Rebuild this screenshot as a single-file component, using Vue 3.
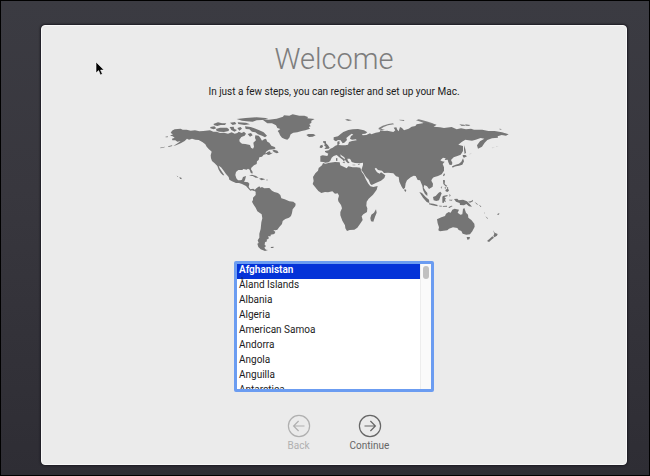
<script setup>
import { ref } from 'vue';

const countries = [
  'Afghanistan',
  'Åland Islands',
  'Albania',
  'Algeria',
  'American Samoa',
  'Andorra',
  'Angola',
  'Anguilla',
  'Antarctica',
  'Antigua & Barbuda',
  'Argentina',
  'Armenia'
];
const country = ref('Afghanistan');
</script>

<template>
  <div class="desktop">
    <main class="window">
      <h1>Welcome</h1>
      <label class="intro" for="country"
        >In just a few steps, you can register and set up your Mac.</label
      >

      <svg class="map" viewBox="0 0 1104 450" aria-hidden="true">
        <!-- the Americas and Greenland -->
        <g>
          <path
            d="M62 84L66 77 74 73 92 71 98 74 110 74 122 77 135 76 148 79 160 78 180 76 190 80 200 80 210 84 222 83 234 86 245 82 254 86 262 84 266 80 275 84 282 80 288 86 284 92 274 96 268 104 269 110 276 116 286 117 300 120 303 128 309 131 312 125 310 113 318 106 315 99 316 91 326 92 331 98 336 107 342 103 348 101 352 110 358 113 364 122 374 126 377 130 372 133 357 134 348 140 346 146 354 140 360 139 362 144 369 143 359 149 354 150 350 147 341 149 336 155 328 157 326 165 321 169 320 177 312 181 304 188 303 193 308 201 307 206 302 203 299 194 294 191 290 194 280 192 277 195 265 195 258 201 256 210 259 220 264 226 271 226 276 224 279 216 288 213 285 225 282 230 294 232 298 236 296 246 301 253 310 251 316 256 312 258 306 256 301 257 294 250 288 243 276 237 267 234 258 234 246 229 238 224 236 216 228 207 220 196 213 187 206 182 209 190 216 200 223 211 219 211 212 204 206 194 202 183 194 175 186 168 183 160 182 151 185 140 182 137 176 132 170 125 166 118 157 111 146 105 136 104 126 101 117 104 111 101 104 108 92 115 78 121 70 123 84 114 92 108 82 110 76 106 67 106 66 101 74 98 68 94 60 92 69 88Z"
          />
          <path
            d="M312 257L320 249 328 244 331 248 336 246 343 250 358 249 366 257 373 261 384 264 391 270 394 280 404 283 418 289 430 290 437 296 436 303 428 313 426 324 423 333 417 338 406 342 398 348 396 357 388 366 382 374 377 376 370 375 376 381 373 387 362 389 362 394 354 394 357 400 350 404 351 409 345 412 344 419 348 423 343 428 348 434 354 435 345 438 332 433 325 426 322 416 326 414 323 406 328 398 328 386 332 372 334 352 337 340 335 328 322 319 317 308 310 298 306 290 309 285 309 278 317 270 317 260Z"
          />
          <path
            d="M335 42L356 44 380 41 399 35 402 31 418 32 428 28 448 32 463 32 474 36 472 40 494 42 484 47 484 54 478 57 482 64 476 66 480 71 466 76 455 78 442 82 430 83 422 88 418 98 412 104 404 102 396 98 390 91 387 83 383 78 391 72 382 69 378 61 366 55 352 55 344 49Z"
          />
          <path
            d="M181 66L193 64 199 70 191 73 181 70ZM198 72L210 68 231 68 237 73 236 78 222 81 208 80 200 78ZM190 57L204 52 216 55 229 55 225 60 212 60 202 63 193 61ZM240 53L255 51 259 57 248 60ZM260 42L287 39 319 37 338 38 355 40 336 45 320 46 308 50 290 49 276 47ZM263 52L288 53 300 58 283 60 265 57ZM239 66L251 65 253 72 261 75 254 80 244 75ZM262 69L272 66 276 71 268 77ZM285 64L302 66 313 70 328 76 341 82 351 92 345 97 336 92 324 88 316 82 306 80 298 73 287 72ZM293 87L303 84 308 91 300 95ZM367 137L372 134 382 137 386 143 380 145 373 142Z"
          />
          <path
            d="M297 212L306 209 318 213 326 218 317 218 308 213ZM327 221L334 219 346 223 335 226ZM348 224L354 224 354 226 348 226ZM362 426L371 425 370 429 363 429ZM88 216L95 219 94 223 90 221ZM80 212L85 214 82 215ZM30 128L44 125 44 127 32 130ZM54 124L66 121 67 123 56 126ZM46 95L54 94 53 97 47 97ZM469 90L475 87 490 87 497 91 488 95 477 96Z"
          />
        </g>

        <!-- Europe, Asia and Africa -->
        <g transform="translate(360)">
          <path
            d="M151 153L158 151 172 153 175 146 165 141 165 138 176 136 181 131 188 128 196 122 202 120 202 110 208 108 209 116 205 120 215 121 226 121 234 119 237 111 246 108 260 106 258 103 246 104 240 101 243 93 250 89 245 86 236 93 229 99 231 105 223 113 218 115 212 106 204 105 198 109 191 105 191 97 204 94 212 87 220 81 235 75 248 73 264 72 282 76 292 82 286 86 276 87 278 91 289 90 300 85 304 88 317 83 329 81 331 76 342 78 352 77 370 81 376 76 371 68 379 67 382 74 386 79 390 66 396 69 402 76 416 71 425 65 436 63 440 58 458 55 469 51 483 56 500 59 491 65 510 67 522 69 545 66 560 73 573 70 588 73 603 71 612 74 637 74 655 78 674 78 696 82 716 88 708 92 695 90 683 94 684 98 666 100 652 105 644 113 636 125 624 131 621 121 630 109 643 101 632 99 617 104 606 107 586 104 575 111 565 119 579 123 579 138 572 149 562 153 551 157 543 165 547 173 546 179 539 180 535 172 533 164 524 165 527 160 519 158 511 166 516 169 524 170 518 177 522 187 522 197 515 208 504 213 491 217 486 222 484 227 489 236 488 245 477 252 471 244 463 240 461 248 467 258 472 264 472 273 465 267 459 255 457 242 450 226 443 225 437 213 431 212 422 217 411 226 407 235 405 248 400 253 395 245 388 230 386 216 378 214 370 205 354 203 342 204 336 197 324 195 318 188 314 191 321 202 329 206 333 202 346 211 343 219 333 227 319 233 305 240 301 237 296 224 288 216 279 202 274 195 276 189 279 180 279 173 268 175 255 174 245 171 242 164 239 161 232 161 234 168 239 173 234 175 227 168 223 157 214 151 211 148 212 154 226 164 221 169 218 164 207 156 200 150 191 153 185 158 181 167 176 172 166 173 160 171 151 170Z"
          />
          <path
            d="M159 174L166 176 179 173 195 171 209 172 211 181 224 187 230 190 235 184 248 187 260 187 271 188 275 200 282 210 287 222 295 236 301 244 310 246 323 243 320 254 309 269 296 281 290 290 289 302 292 310 291 321 280 328 275 334 278 345 270 357 262 368 253 374 239 375 231 378 226 370 225 361 217 347 211 331 211 321 216 310 213 300 205 289 204 282 207 272 203 265 195 266 187 259 174 262 165 261 154 264 145 258 137 248 128 237 131 228 129 216 136 205 144 197 146 189 156 181Z"
          />
          <path
            d="M318 313L320 323 315 335 310 350 303 349 301 339 304 329 312 323ZM160 108L168 109 168 115 174 121 179 128 176 131 163 132 168 126 162 121 165 117 159 112ZM150 122L157 119 159 125 155 129 149 128ZM217 171L225 170 223 175ZM198 160L202 159 202 168 198 167ZM247 179L256 179 256 181 248 181ZM263 178L270 176 267 180ZM404 252L409 255 407 261 403 257Z"
          />
          <path
            d="M326 73L326 69 338 62 355 57 369 55 372 58 354 61 341 66 333 71 345 75 337 76ZM438 46L446 43 458 46 474 50 488 55 498 60 482 61 466 56 452 50ZM568 58L583 59 587 62 575 63ZM586 58L601 60 597 63 587 62ZM688 71L695 72 693 74 688 73ZM225 44L232 42 246 46 235 48ZM388 44L403 45 402 48 389 46Z"
            opacity=".9"
          />
        </g>

        <!-- the Pacific rim -->
        <g transform="translate(720)">
          <path
            d="M141 343L154 337 165 333 168 326 176 321 182 323 187 314 194 311 207 314 203 323 211 329 217 328 219 312 223 309 228 323 234 329 235 338 244 345 253 356 254 365 247 379 240 388 229 389 218 386 214 378 206 375 202 369 189 367 177 371 172 376 150 379 145 376 147 367 143 355ZM230 396L240 396 238 403 232 404Z"
          />
          <path
            d="M222 121L226 132 228 143 224 147 222 134ZM218 150L226 150 231 154 222 158 219 156ZM219 160L222 169 217 179 207 182 198 184 193 185 188 188 186 184 197 179 207 176 214 170ZM162 205L165 208 162 214 159 212ZM120 218L126 218 123 223 120 222ZM159 225L165 226 164 237 172 243 168 245 160 237ZM166 255L174 250 177 257 172 261 167 259ZM164 246l5 2-4 4zM170 245l5 3-3 3zM152 248l5-6-3 9z"
          />
          <path
            d="M88 261L96 264 107 276 117 284 118 294 110 291 99 278ZM117 295L130 296 143 300 142 304 127 301 117 298ZM146 302l9 0 0 3-8-1zM158 303l13-1 0 3-12 0zM175 307l9-5 4 1-10 6zM129 276L137 273 146 263 151 260 155 265 151 275 147 286 139 288 131 286ZM157 275L161 272 173 270 172 274 163 276 168 281 165 284 168 292 163 289 161 294 157 293ZM178 267l4 4-3 5zM177 284l11 0-3 3-8-1zM192 282L202 281 206 286 219 284 231 289 239 297 246 305 237 304 229 297 222 301 210 300 209 294 198 290ZM234 290l10-2 4-4 1 5-9 4zM254 291l6 4 5 5-5-2zM266 299l8 5-2 2zM282 320l3 6-2-1zM286 334l8 6-2 1zM322 327l6-3-1 5-5 0z"
          />
          <path
            d="M309 376L314 383 323 387 321 392 313 397 310 393 313 386ZM307 394L312 398 306 403 297 411 291 408 299 401Z"
          />
          <path d="M238 147l8-4-7 6zM305 128l10-2-8 4zM318 124l8 1-7 1z" opacity=".3" />
        </g>
      </svg>

      <div class="picker">
        <select id="country" v-model="country" size="8">
          <option v-for="name in countries" :key="name" :value="name">{{ name }}</option>
        </select>
        <span class="track"><span class="thumb"></span></span>
      </div>

      <nav class="actions">
        <button type="button" disabled>
          <svg viewBox="0 0 24 24" aria-hidden="true">
            <circle cx="12" cy="12" r="10.6" />
            <path d="M17.5 12H6.8M11.6 7L6.6 12l5 5" />
          </svg>
          Back
        </button>
        <button type="button">
          <svg viewBox="0 0 24 24" aria-hidden="true">
            <circle cx="12" cy="12" r="10.6" />
            <path d="M6.5 12h10.7M12.4 7l5 5-5 5" />
          </svg>
          Continue
        </button>
      </nav>
    </main>

    <svg class="cursor" viewBox="0 0 10 15" aria-hidden="true">
      <path d="M1 1v11l2.6-2.4L5.4 14l2-.9-1.8-4H9z" />
    </svg>
  </div>
</template>

<style>
body {
  margin: 0;
}
</style>

<style scoped>
.desktop {
  position: relative;
  display: flex;
  box-sizing: border-box;
  min-height: 100vh;
  padding: 24px 22px 10px 40px;
  border: 1px solid #000;
  background: linear-gradient(#3b3b42, #38373e 40%, #2e2d34);
  font-family: Roboto, 'Liberation Sans', sans-serif;
  color: #1c1c1c;
}
.window {
  flex: 1;
  display: flex;
  flex-direction: column;
  align-items: center;
  box-sizing: border-box;
  padding-top: 14px;
  border: 1px solid #f8f8f8;
  border-radius: 4px;
  background: #ebebeb;
  box-shadow: 0 0 2px 1px #1c1b22;
}
h1 {
  margin: 0;
  font-size: 29px;
  font-weight: 300;
  line-height: 38px;
  color: #7d7d7d;
}
.intro {
  margin-top: 6px;
  font-size: 10px;
  line-height: 15px;
}
.map {
  width: 368px;
  max-width: 100%;
  margin-top: 6px;
  fill: #757575;
}

.picker {
  position: relative;
  width: 200px;
  margin-top: 6px;
}
select {
  display: block;
  box-sizing: border-box;
  width: 100%;
  height: 131px;
  padding: 0;
  border: 3px solid #6b9cf1;
  border-radius: 2px;
  outline: none;
  background: #fff;
  font-family: inherit;
  font-size: 10px;
  color: #1c1c1c;
  overflow: hidden;
}
option {
  min-height: 15px;
  padding: 0 2px;
  line-height: 15px;
}
option:checked {
  background: linear-gradient(#0433d8, #0433d8);
  font-weight: 600;
  color: #fff;
}
.track {
  position: absolute;
  top: 3px;
  right: 3px;
  bottom: 3px;
  width: 11px;
  box-sizing: border-box;
  padding: 2px;
  border-left: 1px solid #ededed;
  background: #fafafa;
  pointer-events: none;
}
.thumb {
  display: block;
  height: 13px;
  border-radius: 3px;
  background: #c1c1c1;
}

.actions {
  display: flex;
  margin-top: 22px;
}
button {
  display: flex;
  flex-direction: column;
  align-items: center;
  width: 71px;
  padding: 0;
  border: none;
  background: none;
  font-family: inherit;
  font-size: 10px;
  line-height: 15px;
  color: #666;
}
button:disabled {
  color: #b0b0b0;
}
button svg {
  width: 24px;
  height: 24px;
  fill: none;
  stroke: currentColor;
  stroke-width: 1.2;
}
.cursor {
  position: absolute;
  top: 60px;
  left: 94px;
  width: 10px;
  height: 15px;
  fill: #000;
  stroke: #fff;
  stroke-width: 0.6;
}
</style>
